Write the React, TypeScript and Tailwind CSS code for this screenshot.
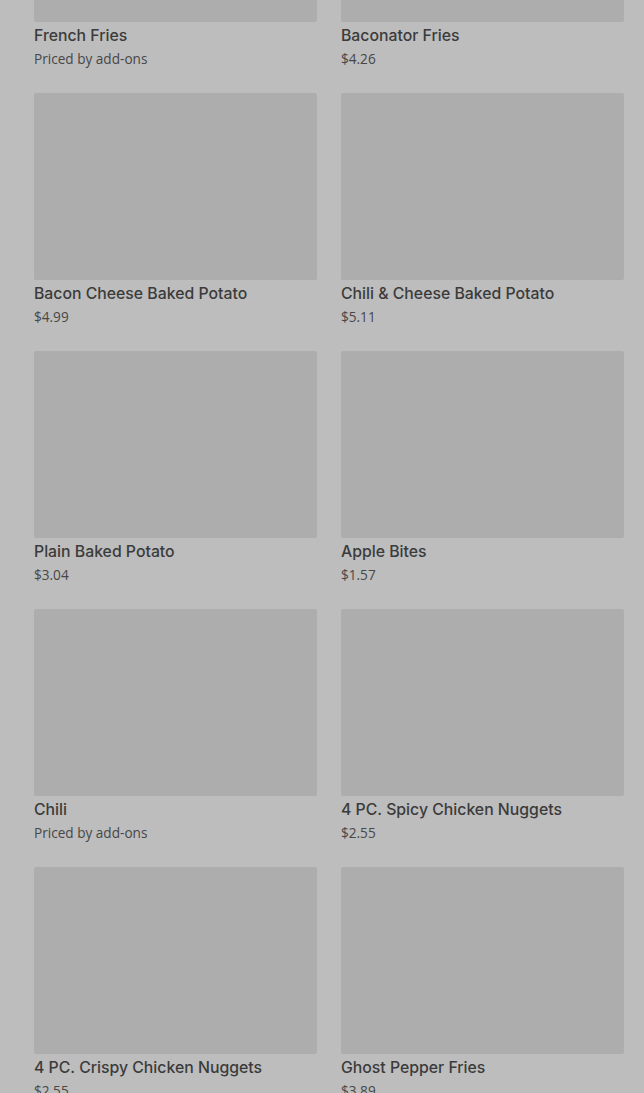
import React from 'react';

const items = [
  { name: 'French Fries', price: 'Priced by add-ons' },
  { name: 'Baconator Fries', price: '$4.26' },
  { name: 'Bacon Cheese Baked Potato', price: '$4.99' },
  { name: 'Chili & Cheese Baked Potato', price: '$5.11' },
  { name: 'Plain Baked Potato', price: '$3.04' },
  { name: 'Apple Bites', price: '$1.57' },
  { name: 'Chili', price: 'Priced by add-ons' },
  { name: '4 PC. Spicy Chicken Nuggets', price: '$2.55' },
  { name: '4 PC. Crispy Chicken Nuggets', price: '$2.55' },
  { name: 'Ghost Pepper Fries', price: '$3.89' },
];

function MenuCard({ name, price }: { name: string; price: string }) {
  return (
    <div className="flex flex-col">
      <div className="h-[187px] w-full rounded-[2px] bg-[#adadad]" />
      <div className="mt-[4px] font-['Inter',sans-serif] text-[15.8px] leading-[20px] font-medium text-[#3b3b3b]">
        {name}
      </div>
      <div className="mt-[4px] font-['Open_Sans',sans-serif] text-[13.6px] leading-[18px] text-[#474747]">
        {price}
      </div>
    </div>
  );
}

export default function App() {
  return (
    <div className="h-[1093px] w-full overflow-hidden bg-[#bdbdbd]">
      <div className="-mt-[165px] grid grid-cols-2 gap-x-[24px] gap-y-[25px] pl-[34px] pr-[20px]">
        {items.map((item) => (
          <MenuCard key={item.name} name={item.name} price={item.price} />
        ))}
      </div>
    </div>
  );
}
